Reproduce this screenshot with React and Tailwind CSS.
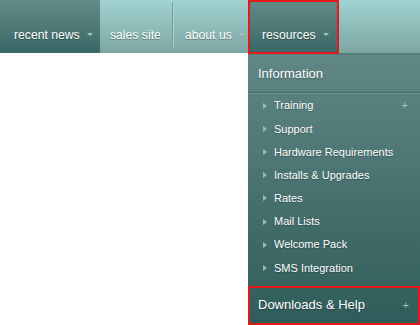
import React from "react";

const navItems = [
  { label: "recent news", arrow: true, active: true, w: "w-[100px]", pl: "pl-[14px]" },
  { label: "sales site", arrow: false, active: false, w: "w-[74px]", pl: "pl-[10px]", sep: true },
  { label: "about us", arrow: true, active: false, w: "w-[74px]", pl: "pl-[11px]" },
];

const links = [
  "Training",
  "Support",
  "Hardware Requirements",
  "Installs & Upgrades",
  "Rates",
  "Mail Lists",
  "Welcome Pack",
  "SMS Integration",
];

function DownArrow() {
  return (
    <span className="ml-[7px] inline-block w-0 h-0 border-l-[3px] border-r-[3px] border-t-[3px] border-l-transparent border-r-transparent border-t-[#a9c2c0] translate-y-[-1px]" />
  );
}

export default function App() {
  return (
    <div className="relative w-[420px] h-[325px] bg-white overflow-hidden font-['Liberation_Sans',Arial,sans-serif]">
      <nav className="flex h-[53px] bg-gradient-to-b from-[#a1d3d0] to-[#7da6a3]">
        {navItems.map((item, i) => (
          <div
            key={i}
            className={`relative flex items-center h-full pt-[17px] ${item.w} ${item.pl} ${
              item.active ? "bg-gradient-to-b from-[#628b89] to-[#3a6866]" : ""
            }`}
          >
            <span className="text-white text-[12.2px] [text-shadow:0_1px_1px_rgba(0,0,0,0.35)]">
              {item.label}
            </span>
            {item.arrow && <DownArrow />}
            {item.sep && (
              <span className="absolute right-0 top-[2px] h-[45px] w-[2px] border-l border-[#7a9e9b] bg-[#a8d0cd]" />
            )}
          </div>
        ))}
        <div className="relative flex items-center h-[54px] w-[91px] pl-[12px] pt-[17px] border-2 border-[#e11b1b] bg-gradient-to-b from-[#608987] to-[#3a6866] z-10">
          <span className="text-white text-[12.2px] [text-shadow:0_1px_1px_rgba(0,0,0,0.35)]">
            resources
          </span>
          <DownArrow />
        </div>
      </nav>

      <div className="absolute left-[248px] top-[53px] w-[172px] h-[272px] border-t-2 border-[#5b7e7c] bg-gradient-to-b from-[#608785] to-[#2f5c5a] text-white">
        <div className="h-[37px] flex items-center pl-[10px] text-[13px] [text-shadow:0_1px_1px_rgba(0,0,0,0.3)]">
          Information
        </div>
        <div className="h-[2px] border-t border-[#4a706e] bg-[#6b918f]" />
        <ul className="flex flex-col">
          {links.map((l, i) => (
            <li key={l} className="h-[23.2px] flex items-center pl-[15px] pr-[12px] text-[11px]">
              <span className="inline-block w-0 h-0 border-t-[3px] border-b-[3px] border-l-[4px] border-t-transparent border-b-transparent border-l-[#9fb9b7] mr-[7px]" />
              <span className="flex-1 [text-shadow:0_1px_1px_rgba(0,0,0,0.3)]">{l}</span>
              {i === 0 && <span className="text-[#b4cbc9] text-[11px]">+</span>}
            </li>
          ))}
        </ul>
        <div className="mt-[6px] h-[39px] flex items-center justify-between pl-[8px] pr-[9px] border-2 border-[#e11b1b] text-[13px]">
          <span className="[text-shadow:0_1px_1px_rgba(0,0,0,0.3)]">Downloads &amp; Help</span>
          <span className="text-[#a9c2c0] text-[11px]">+</span>
        </div>
      </div>
    </div>
  );
}
